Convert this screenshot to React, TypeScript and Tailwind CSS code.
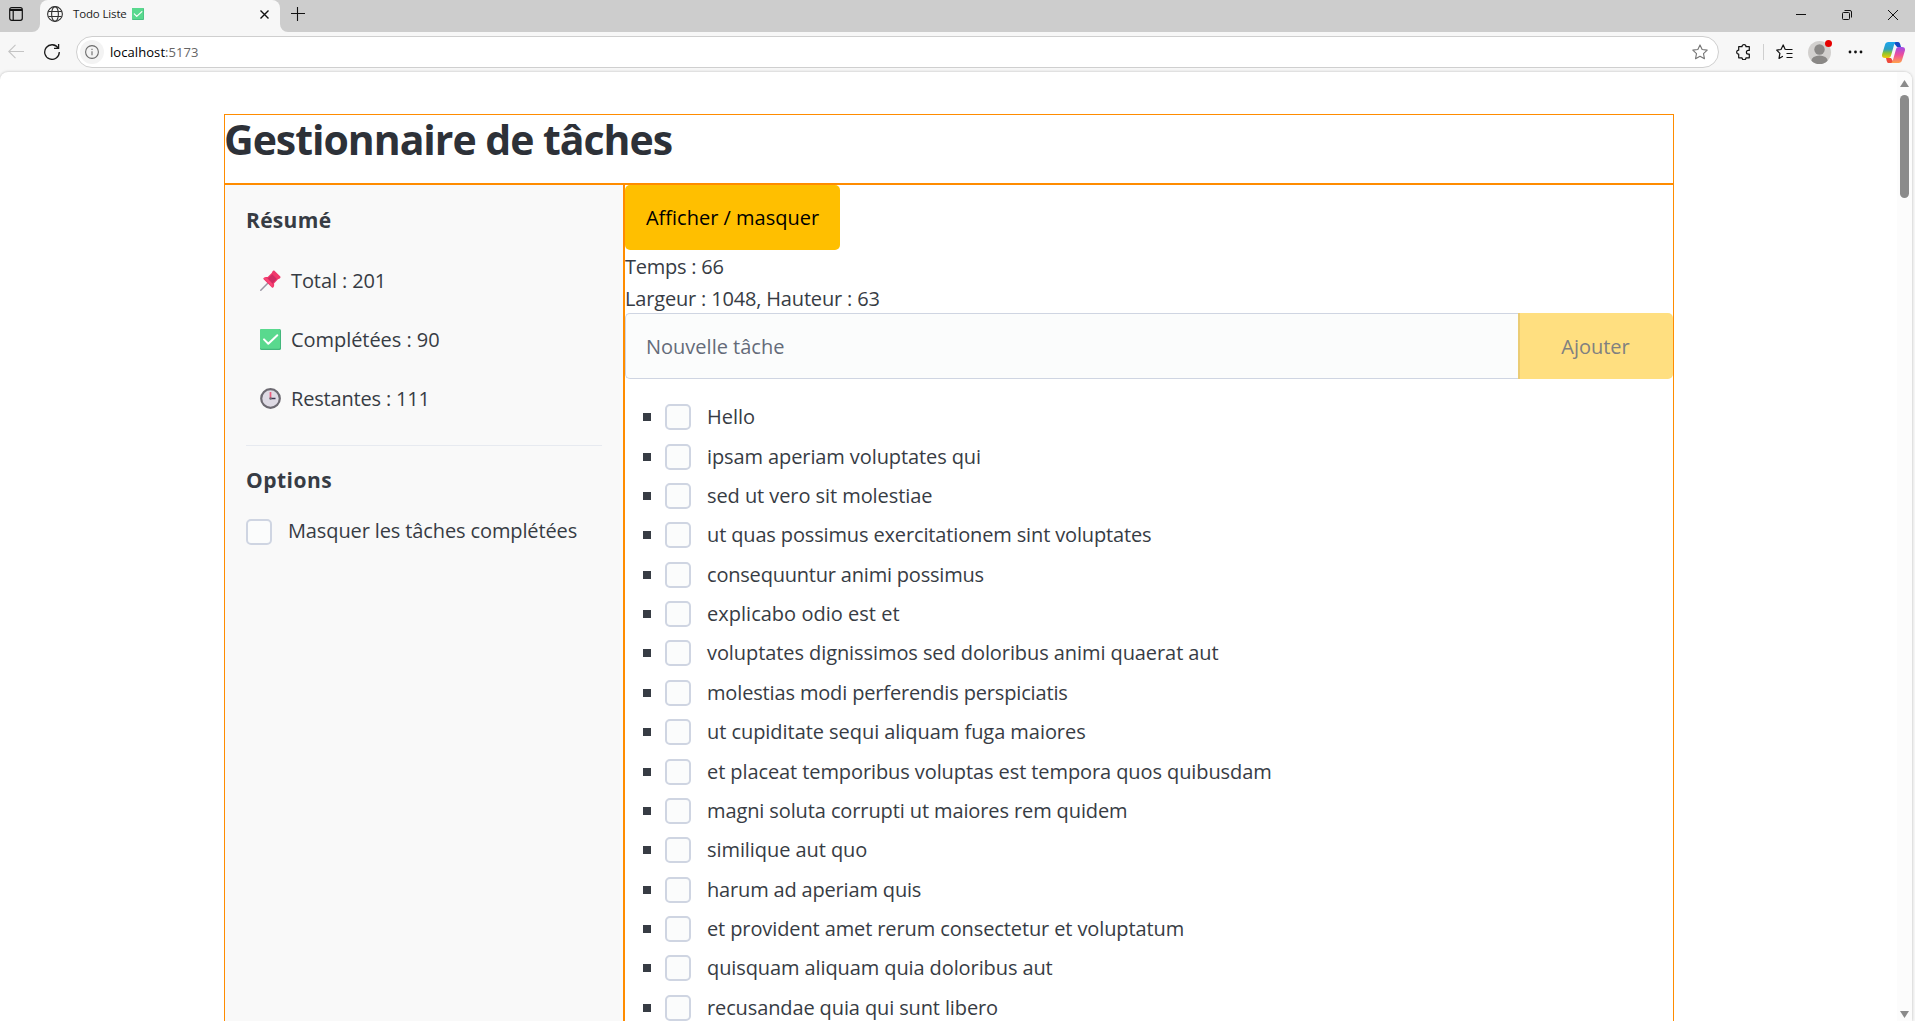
import React from "react";

const tasks: { text: string; track: string }[] = [
  { text: "Hello", track: "tracking-[0px]" },
  { text: "ipsam aperiam voluptates qui", track: "tracking-[-0.1px]" },
  { text: "sed ut vero sit molestiae", track: "tracking-[-0.07px]" },
  { text: "ut quas possimus exercitationem sint voluptates", track: "tracking-[-0.14px]" },
  { text: "consequuntur animi possimus", track: "tracking-[-0.2px]" },
  { text: "explicabo odio est et", track: "tracking-[0.02px]" },
  { text: "voluptates dignissimos sed doloribus animi quaerat aut", track: "tracking-[-0.08px]" },
  { text: "molestias modi perferendis perspiciatis", track: "tracking-[-0.15px]" },
  { text: "ut cupiditate sequi aliquam fuga maiores", track: "tracking-[-0.05px]" },
  { text: "et placeat temporibus voluptas est tempora quos quibusdam", track: "tracking-[-0.09px]" },
  { text: "magni soluta corrupti ut maiores rem quidem", track: "tracking-[-0.11px]" },
  { text: "similique aut quo", track: "tracking-[-0.07px]" },
  { text: "harum ad aperiam quis", track: "tracking-[-0.17px]" },
  { text: "et provident amet rerum consectetur et voluptatum", track: "tracking-[-0.11px]" },
  { text: "quisquam aliquam quia doloribus aut", track: "tracking-[-0.1px]" },
  { text: "recusandae quia qui sunt libero", track: "tracking-[-0.12px]" },
];

function CheckEmoji({ size }: { size: number }) {
  return (
    <svg width={size} height={size} viewBox="0 0 21 21" className="shrink-0">
      <rect width="21" height="21" rx="1.6" fill="#43b77c" />
      <rect width="20" height="19.8" rx="1.4" fill="#59d98e" />
      <path d="M4 10.4l4.3 4.4 9-8.6" fill="none" stroke="#fff" strokeWidth="2" strokeLinecap="round" strokeLinejoin="round" />
    </svg>
  );
}

function PinEmoji() {
  return (
    <svg width="21" height="21" viewBox="0 0 21 21" className="shrink-0">
      <path d="M8.5 12.5L.8 20.3" stroke="#9a96a3" strokeWidth="1.5" strokeLinecap="round" />
      <path d="M12.6 1.2c.5-.9 1.4-1 2.1-.3l5.4 5.4c.7.7.5 1.6-.4 2.1l-1.7.8-4 4.2c.4 1.7.2 3-.8 4.1-.4.4-.9.4-1.300 0l-8.300-8.300c-.4-.4-.4-.9 0-1.300 1.100-1 2.400-1.200 4.100-.8l4-4.200z" fill="#f0376b" />
      <path d="M12.200 4.200l4.700 4.700-4.500 4.500-4.700-4.700z" fill="#cf2a62" />
      <path d="M3.800 8.300c1.600-.6 2.900-.2 4.200.9l3.500 3.500c1 1.200 1.300 2.600.9 4.200z" fill="#fa4576" />
    </svg>
  );
}

function ClockEmoji() {
  return (
    <svg width="21" height="21" viewBox="0 0 21 21" className="shrink-0">
      <circle cx="10.5" cy="10.5" r="9.3" fill="#dedae4" stroke="#6d6a72" strokeWidth="2.200" />
      <path d="M10.500 10.500H15.500" stroke="#3c3551" strokeWidth="1.500" />
      <path d="M10.500 4V10.500" stroke="#ec5b7d" strokeWidth="1.700" />
      <circle cx="10.500" cy="10.500" r="1.200" fill="#6d6a72" />
    </svg>
  );
}

function Checkbox() {
  return <span className="size-[26px] shrink-0 rounded-[5px] border-2 border-[#cfd5e2] bg-[#fbfcfc]" />;
}

function TabStrip() {
  return (
    <div className="flex h-8 bg-[#cdcdcd]">
      <div className="flex w-10 items-center pl-[9px] pb-1">
        <svg width="14" height="14" viewBox="0 0 14 14" fill="none" stroke="#111" strokeWidth="1.200">
          <rect x=".7" y=".7" width="12.600" height="12.600" rx="2" />
          <path d="M1 3h12" strokeWidth="2" />
          <path d="M4.200 4v9" />
        </svg>
      </div>
      <div className="relative flex w-60 items-center rounded-t-[8px] bg-[#f7f7f7] pb-[4px] pl-[7px]">
        <svg className="absolute -left-2 bottom-0" width="8" height="8"><path d="M8 0v8H0a8 8 0 0 0 8-8z" fill="#f7f7f7" /></svg>
        <svg className="absolute -right-2 bottom-0" width="8" height="8"><path d="M0 0v8h8a8 8 0 0 1-8-8z" fill="#f7f7f7" /></svg>
        <svg width="16" height="16" viewBox="0 0 16 16" fill="none" stroke="#333" strokeWidth="1.100">
          <circle cx="8" cy="8" r="7.400" />
          <ellipse cx="8" cy="8" rx="3.400" ry="7.400" />
          <path d="M1.400 5.500h13.200M1.400 10.500h13.200" />
        </svg>
        <span className="ml-[10px] w-[59px] whitespace-nowrap text-[11.500px] leading-4 tracking-[-0.15px] text-[#1b1b1b]">Todo Liste</span>
        <CheckEmoji size={12} />
        <svg className="ml-[116px]" width="9" height="9" viewBox="0 0 9 9" stroke="#111" strokeWidth="1.400"><path d="M.5.5l8 8M8.500.5l-8 8" /></svg>
      </div>
      <svg className="mt-[7px] ml-[11px]" width="14" height="14" viewBox="0 0 14 14" stroke="#111" strokeWidth="1.100"><path d="M0 6.500h14M6.500 0v14" /></svg>
      <div className="ml-auto flex items-center pr-[17px] pb-[2px]">
        <svg width="10" height="10" stroke="#111"><path d="M0 4.500h10" /></svg>
        <svg className="ml-9" width="10" height="10" viewBox="0 0 10 10" fill="none" stroke="#111">
          <rect x=".5" y="2.500" width="7" height="7" rx="1" />
          <path d="M2.500.5H8a1.500 1.500 0 0 1 1.500 1.500v5.500" />
        </svg>
        <svg className="ml-9" width="10" height="10" viewBox="0 0 10 10" stroke="#111"><path d="M0 0l10 10M10 0L0 10" /></svg>
      </div>
    </div>
  );
}

function Toolbar() {
  return (
    <div className="flex h-10 items-center bg-[#f7f7f7]">
      <svg className="ml-2" width="16" height="16" viewBox="0 0 16 16" fill="none" stroke="#c4c4c4" strokeWidth="1.100"><path d="M16 7.500H.8M7.500.8L.8 7.500l6.700 6.700" /></svg>
      <svg className="ml-5" width="16" height="16" viewBox="0 0 16 16" fill="none" stroke="#1b1b1b" strokeWidth="1.300">
        <path d="M14.200 4.200A7.300 7.300 0 1 0 15.300 8" />
        <path d="M14.600 0v4.400H10" />
      </svg>
      <div className="ml-4 flex h-8 w-[1643px] items-center rounded-full border border-[#cfcfcf] bg-white pl-[3px] pr-[10px]">
        <div className="flex size-6 items-center justify-center rounded-full bg-[#f3f3f3]">
          <svg width="14" height="14" viewBox="0 0 14 14" fill="none" stroke="#6b6b6b" strokeWidth="1.100">
            <circle cx="7" cy="7" r="6.400" /><path d="M7 6.200v4M7 3.700v1.300" />
          </svg>
        </div>
        <span className="ml-[6px] text-[13px] leading-5 tracking-[0.07px] text-black">localhost<span className="text-[#666]">:5173</span></span>
        <svg className="ml-auto" width="16" height="16" viewBox="0 0 16 16" fill="none" stroke="#757575" strokeWidth="1.100" strokeLinejoin="round">
          <path d="M8 .9l2.150 4.600 5.050.65-3.700 3.500.95 5L8 12.200l-4.450 2.450.95-5L.8 6.150l5.050-.65z" />
        </svg>
      </div>
      <svg className="ml-[17px]" width="16" height="16" viewBox="0 0 16 16" fill="none" stroke="#111" strokeWidth="1.200" strokeLinejoin="round">
        <path d="M2.700 2.700H6a2 2 0 0 1 4 0h3.300v3.700h-1a1.900 1.900 0 0 0 0 3.800h1v3.600H10a2 2 0 0 1-4 0H2.700v-3.600a2 2 0 0 1 0-4z" />
      </svg>
      <span className="ml-[11px] h-4 w-px bg-[#cfcfcf]" />
      <svg className="ml-3" width="17" height="16" viewBox="0 0 17 16" fill="none" stroke="#111" strokeWidth="1.200" strokeLinejoin="round">
        <path d="M9.200 5.500L7.200.9 5 5.500.700 6.150l3.200 3.300-.9 5 3.900-2.200M9.200 5.500h7.300M10.500 9.500h6M10.500 13.500h6" />
      </svg>
      <div className="relative ml-[15px] size-[23px] overflow-visible">
        <svg width="23" height="23" viewBox="0 0 23 23">
          <clipPath id="avatar"><circle cx="11.500" cy="11.500" r="11.500" /></clipPath>
          <g clipPath="url(#avatar)"><rect width="23" height="23" fill="#d2d0ce" /><circle cx="11.500" cy="8.500" r="5.200" fill="#8a8886" /><ellipse cx="11.500" cy="20" rx="8.200" ry="5.500" fill="#8a8886" /></g>
        </svg>
        <span className="absolute -top-px -right-px size-[7px] rounded-full bg-[#e60000]" />
      </div>
      <svg className="ml-[17px]" width="15" height="4" fill="#111"><circle cx="2" cy="2" r="1.400" /><circle cx="7.500" cy="2" r="1.400" /><circle cx="13" cy="2" r="1.400" /></svg>
      <svg className="ml-[19px]" width="23" height="21" viewBox="0 0 23 21">
        <defs>
          <linearGradient id="cl" x1="0" y1="0" x2="0" y2="1"><stop offset="0" stopColor="#1aa5ee" /><stop offset=".45" stopColor="#2c9fc0" /><stop offset=".7" stopColor="#8fc52c" /><stop offset="1" stopColor="#f5c80a" /></linearGradient>
          <linearGradient id="cr" x1="0" y1="0" x2="0" y2="1"><stop offset="0" stopColor="#a04be8" /><stop offset=".5" stopColor="#ee4f9b" /><stop offset="1" stopColor="#ffa34a" /></linearGradient>
        </defs>
        <path d="M11 0h5c1.500 0 1.800 1 2.300 2.600L19 5h-4z" fill="#1549c4" />
        <path d="M12 21H7c-1.500 0-2-1-2.400-2.600L4 16h5z" fill="#ee4a3c" />
        <path d="M6.500 0H14c-1.200.6-1.700 2-2.200 3.800L9.200 13c-.5 2-1.200 3-3 3H3c-2.500 0-3.500-1.500-2.800-4L3 2.700C3.600.9 4.500 0 6.500 0z" fill="url(#cl)" />
        <path d="M16.500 21H9c1.200-.6 1.700-2 2.200-3.800L13.800 8c.5-2 1.200-3 3-3H20c2.500 0 3.500 1.500 2.800 4L20 18.300c-.6 1.800-1.500 2.700-3.500 2.700z" fill="url(#cr)" />
      </svg>
    </div>
  );
}

function Sidebar() {
  const stats = [
    { icon: <PinEmoji />, label: "Total : 201", track: "tracking-[-0.1px]" },
    { icon: <CheckEmoji size={21} />, label: "Complétées : 90", track: "tracking-[-0.05px]" },
    { icon: <ClockEmoji />, label: "Restantes : 111", track: "tracking-[-0.18px]" },
  ];
  return (
    <aside className="w-[400px] shrink-0 border border-[#ff8c00] bg-[#f9f9f9] px-[21px] pt-[19px]">
      <h2 className="text-[21px] leading-8 font-bold tracking-[0.3px]">Résumé</h2>
      <ul className="mt-[15px] pl-[14px]">
        {stats.map((s) => (
          <li key={s.label} className="flex h-[59px] items-center gap-[10px]">{s.icon}<span className={s.track}>{s.label}</span></li>
        ))}
      </ul>
      <hr className="mt-[17px] border-[#e7eaf0]" />
      <h2 className="mt-[18px] text-[21px] leading-8 font-bold tracking-[0.5px]">Options</h2>
      <label className="mt-5 flex h-8 items-center"><Checkbox /><span className="-mt-[2px] ml-4 tracking-[-0.12px]">Masquer les tâches complétées</span></label>
    </aside>
  );
}

function Main() {
  return (
    <main className="flex flex-1 flex-col border border-[#ff8c00]">
      <button className="h-[65px] w-[215px] rounded-[5px] bg-[#ffbf00] pt-px text-black">Afficher / masquer</button>
      <div className="h-[31.500px] leading-[33px] tracking-[-0.24px]">Temps : 66</div>
      <div className="h-[31.500px] leading-[33px] tracking-[-0.17px]">Largeur : 1048, Hauteur : 63</div>
      <div className="flex h-[66px] shrink-0">
        <div className="flex flex-1 items-center rounded-l-[5px] border border-r-0 border-[#cfd5e2] bg-[#fbfcfc] pt-[2px] pl-5 text-[#646b79]">Nouvelle tâche</div>
        <div className="flex w-[155px] items-center justify-center rounded-r-[5px] border-l-2 border-[#ebcc74] bg-[#ffdf80] pt-[2px] pr-[2px] text-[#808080]">Ajouter</div>
      </div>
      <ul className="mt-[18.500px] pl-[18px]">
        {tasks.map((t) => (
          <li key={t.text} className="flex h-[39.375px] items-center">
            <span className="size-2 bg-[#373c44]" />
            <span className="ml-[14px] flex"><Checkbox /></span>
            <span className={"ml-4 whitespace-nowrap " + t.track}>{t.text}</span>
          </li>
        ))}
      </ul>
    </main>
  );
}

export default function App() {
  return (
    <div className="flex h-[1021px] w-[1915px] flex-col overflow-hidden bg-[#f7f7f7] font-['Open_Sans','Noto_Sans',sans-serif] text-[20px] leading-8 text-[#373c44]">
      <TabStrip />
      <Toolbar />
      <div className="mr-[3px] flex min-h-0 flex-1 overflow-hidden rounded-t-[8px] bg-white shadow-[0_0_3px_rgba(0,0,0,0.25)]">
        <div className="flex min-w-0 flex-1 flex-col pt-[42px] pl-[224px]">
          <div className="flex w-[1450px] flex-1 flex-col">
            <header className="h-[70px] shrink-0 border border-[#ff8c00]">
              <h1 className="-ml-px text-[41px] leading-[49px] font-bold tracking-[-1.03px] whitespace-nowrap text-[#2d3138]">Gestionnaire de tâches</h1>
            </header>
            <div className="flex min-h-0 flex-1"><Sidebar /><Main /></div>
          </div>
        </div>
        <div className="flex w-[15px] flex-col items-center bg-[#fcfcfc] pt-2">
          <svg width="9" height="7" viewBox="0 0 9 7"><path d="M4.500 0L9 7H0z" fill="#8b8b8b" /></svg>
          <div className="mt-2 h-[103px] w-[9px] rounded-full bg-[#8b8b8b]" />
          <svg className="mt-auto mb-[3px]" width="9" height="7" viewBox="0 0 9 7"><path d="M4.500 7L9 0H0z" fill="#8b8b8b" /></svg>
        </div>
      </div>
    </div>
  );
}
